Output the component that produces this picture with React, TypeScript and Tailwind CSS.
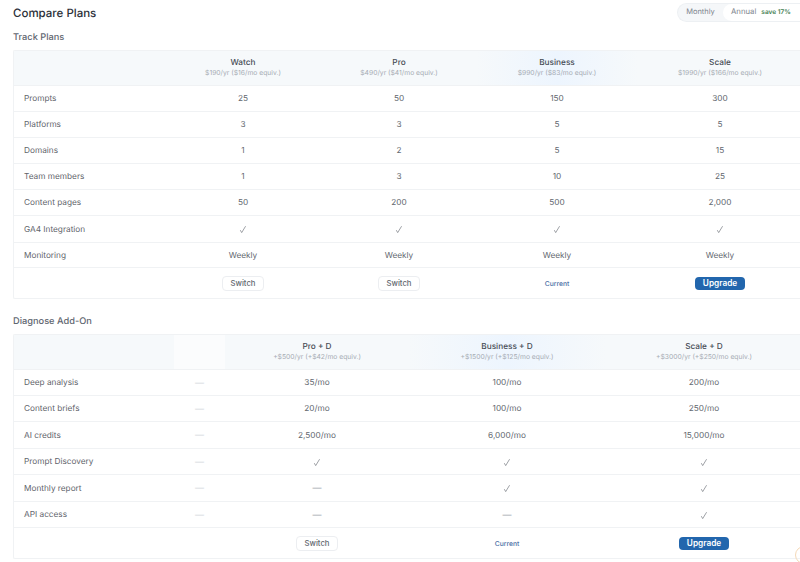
import React, { FC, ReactNode } from 'react';

type Plan = { name: string; price: string; highlight?: boolean; faded?: boolean };
type Row = { label: string; values: string[]; h: string };

const trackPlans: Plan[] = [
  { name: 'Watch', price: '$190/yr ($16/mo equiv.)' },
  { name: 'Pro', price: '$490/yr ($41/mo equiv.)' },
  { name: 'Business', price: '$990/yr ($83/mo equiv.)', highlight: true },
  { name: 'Scale', price: '$1990/yr ($166/mo equiv.)' },
];

const trackRows: Row[] = [
  { label: 'Prompts', values: ['25', '50', '150', '300'], h: 'h-[26px]' },
  { label: 'Platforms', values: ['3', '3', '5', '5'], h: 'h-[26px]' },
  { label: 'Domains', values: ['1', '2', '5', '15'], h: 'h-[26px]' },
  { label: 'Team members', values: ['1', '3', '10', '25'], h: 'h-[26px]' },
  { label: 'Content pages', values: ['50', '200', '500', '2,000'], h: 'h-[26px]' },
  { label: 'GA4 Integration', values: ['✓', '✓', '✓', '✓'], h: 'h-[26.5px]' },
  { label: 'Monitoring', values: ['Weekly', 'Weekly', 'Weekly', 'Weekly'], h: 'h-[25.5px]' },
];

const diagnosePlans: Plan[] = [
  { name: '', price: '', faded: true },
  { name: 'Pro + D', price: '+$500/yr (+$42/mo equiv.)' },
  { name: 'Business + D', price: '+$1500/yr (+$125/mo equiv.)', highlight: true },
  { name: 'Scale + D', price: '+$3000/yr (+$250/mo equiv.)' },
];

const diagnoseRows: Row[] = [
  { label: 'Deep analysis', values: ['—', '35/mo', '100/mo', '200/mo'], h: 'h-[26px]' },
  { label: 'Content briefs', values: ['—', '20/mo', '100/mo', '250/mo'], h: 'h-[26px]' },
  { label: 'AI credits', values: ['—', '2,500/mo', '6,000/mo', '15,000/mo'], h: 'h-[27px]' },
  { label: 'Prompt Discovery', values: ['—', '✓', '✓', '✓'], h: 'h-[26px]' },
  { label: 'Monthly report', values: ['—', '—', '✓', '✓'], h: 'h-[27px]' },
  { label: 'API access', values: ['—', '—', '—', '✓'], h: 'h-[26px]' },
];

const Check: FC = () => (
  <svg className="mx-auto mt-[1px] block" width="8" height="9" viewBox="0 0 8 9" fill="none">
    <path d="M1.3 5.2 L2.7 7.6 L6.6 1.2" stroke="#7d8288" strokeWidth="0.75" />
  </svg>
);

const Cell: FC<{ value: string; pale?: boolean }> = ({ value, pale }) => {
  if (value === '—') {
    return <div className={`pt-[2px] text-center text-[9px] ${pale ? 'text-[#d4d8dd]' : 'text-[#a3a8af]'}`}>—</div>;
  }
  if (value === '✓') return <Check />;
  return <div className="text-center text-[8.25px] text-[#63686f]">{value}</div>;
};

const Header: FC<{ plans: Plan[]; cols: string }> = ({ plans, cols }) => (
  <div className={`grid ${cols} h-[35px] border-b border-[#f0f2f4] bg-[#f6f9fb]`}>
    <div />
    {plans.map((p, i) => (
      <div
        key={i}
        className={`flex flex-col items-center justify-center pb-[1px] ${
          p.highlight
            ? 'bg-gradient-to-r from-[#f6f9fb] via-[#edf5fe] to-[#f6f9fb]'
            : p.faded
              ? 'bg-[#fbfcfd]'
              : ''
        }`}
      >
        {p.name && <div className="text-[8.25px] leading-[11px] font-medium text-[#464c55]">{p.name}</div>}
        {p.price && <div className="text-[6.75px] leading-[10px] text-[#a6acb4]">{p.price}</div>}
      </div>
    ))}
  </div>
);

const Rows: FC<{ rows: Row[]; cols: string; paleFirst?: boolean }> = ({ rows, cols, paleFirst }) => (
  <>
    {rows.map((r) => (
      <div key={r.label} className={`grid ${cols} ${r.h} items-center border-b border-[#f0f2f4]`}>
        <div className="pl-[10px] text-[8.25px] text-[#5f646b]">{r.label}</div>
        {r.values.map((v, i) => (
          <Cell key={i} value={v} pale={paleFirst && i === 0} />
        ))}
      </div>
    ))}
  </>
);

const Switch: FC = () => (
  <div className="flex justify-center">
    <button className="h-[15px] rounded-[4px] border border-[#eceef1] bg-white px-[7px] text-[7.75px] leading-none font-medium text-[#63686f]">
      Switch
    </button>
  </div>
);

const Current: FC = () => <div className="pt-[1px] text-center text-[6.75px] font-medium text-[#4a6fa5]">Current</div>;

const Upgrade: FC = () => (
  <div className="flex justify-center">
    <button className="h-[13px] rounded-[4px] bg-[#2266ad] px-[8px] text-[8.25px] leading-none font-semibold text-white">
      Upgrade
    </button>
  </div>
);

const TableCard: FC<{ children: ReactNode; actions: ReactNode; cols: string }> = ({ children, actions, cols }) => (
  <div className="w-[800px] rounded-l-[2px] border-y border-l border-[#f0f2f4] bg-white">
    {children}
    <div className={`grid ${cols} h-[30px] items-center pt-[1px]`}>{actions}</div>
  </div>
);

const trackCols = 'grid-cols-[151px_156px_156px_160px_166px]';
const diagnoseCols = 'grid-cols-[160px_51px_184px_196px_198px]';

export default function App() {
  return (
    <div className="relative h-[562px] w-[800px] overflow-hidden bg-white font-['Inter',sans-serif] [text-rendering:geometricPrecision] antialiased">
      <div className="flex h-[23px] items-center justify-between pt-[1px] pl-[13px]">
        <h1 className="pt-[3px] text-[11.5px] font-medium text-[#2b3038]">Compare Plans</h1>
        <div className="flex h-[19px] w-[123px] shrink-0 items-center rounded-l-full border-y border-l border-[#edf0f3] bg-[#f5f7f9]">
          <span className="w-[45px] text-center text-[7.5px] text-[#80868e]">Monthly</span>
          <span className="flex h-full flex-1 items-center gap-[5px] rounded-l-full bg-white pl-[8px] text-[7.75px] text-[#80868e]">
            Annual
            <span className="mt-[2px] text-[6.5px] font-semibold text-[#3f7d4f]">save 17%</span>
          </span>
        </div>
      </div>

      <h2 className="mt-[7px] pl-[13px] text-[9.25px] leading-[15px] font-medium text-[#5f6670]">Track Plans</h2>
      <div className="mt-[5px] pl-[13px]">
        <TableCard
          cols={trackCols}
          actions={
            <>
              <div />
              <Switch />
              <Switch />
              <Current />
              <Upgrade />
            </>
          }
        >
          <Header plans={trackPlans} cols={trackCols} />
          <Rows rows={trackRows} cols={trackCols} />
        </TableCard>
      </div>

      <h2 className="mt-[14.5px] pl-[13px] text-[9.25px] leading-[15px] font-medium text-[#5f6670]">Diagnose Add-On</h2>
      <div className="mt-[5.5px] pl-[13px]">
        <TableCard
          cols={diagnoseCols}
          actions={
            <>
              <div />
              <div />
              <Switch />
              <Current />
              <Upgrade />
            </>
          }
        >
          <Header plans={diagnosePlans} cols={diagnoseCols} />
          <Rows rows={diagnoseRows} cols={diagnoseCols} paleFirst />
        </TableCard>
      </div>

      <div className="absolute top-[546px] left-[795px] h-[18px] w-[18px] rounded-full border border-[#f5d9b8]" />
    </div>
  );
}
